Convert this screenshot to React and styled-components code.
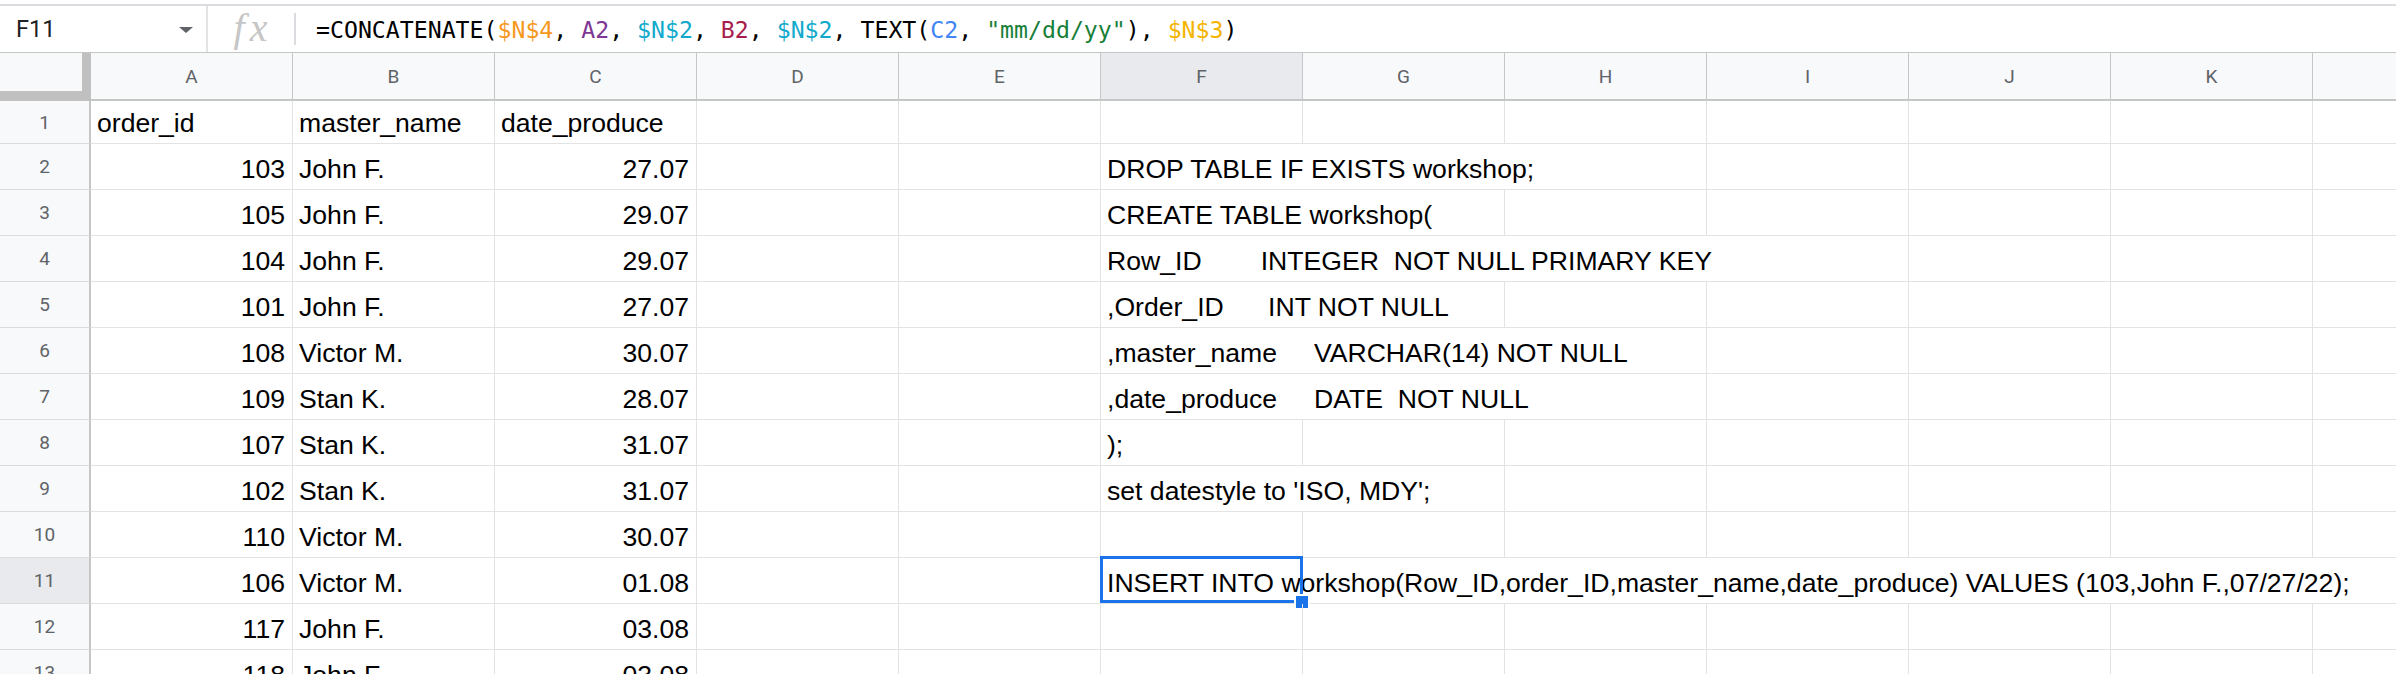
import React from 'react';
import styled, { createGlobalStyle } from 'styled-components';

const GlobalStyle = createGlobalStyle`
  html, body { margin: 0; padding: 0; background: #fff; overflow: hidden; }
  body { width: 2396px; height: 674px; font-family: "Liberation Sans", Arial, sans-serif; }
`;

const COL_W = 202;
const ROWHEAD_W = 91;

const Sheet = styled.div`
  width: 2396px;
  height: 674px;
  overflow: hidden;
  display: flex;
  flex-direction: column;
  background: #fff;
`;

const TopRule = styled.div`
  flex: none;
  margin-top: 4px;
  height: 2px;
  background: #dadce0;
`;

const FormulaBar = styled.div`
  flex: none;
  height: 47px;
  box-sizing: border-box;
  border-bottom: 1px solid #c4c7c5;
  display: flex;
  align-items: center;
`;

const NameBox = styled.div`
  width: 208px;
  height: 100%;
  box-sizing: border-box;
  display: flex;
  align-items: center;
  justify-content: space-between;
  padding: 0 13px 0 16px;
  border-right: 2px solid #e3e3e3;
  font-family: Roboto, "Liberation Sans", sans-serif;
  font-size: 23.5px;
  color: #202124;
`;

const Caret = styled.span`
  width: 0;
  height: 0;
  margin-top: 2px;
  border-left: 7.5px solid transparent;
  border-right: 7.5px solid transparent;
  border-top: 6px solid #5f6368;
`;

const FxBox = styled.div`
  width: 86px;
  height: 100%;
  display: flex;
  align-items: center;
  justify-content: center;
  font-family: "Liberation Serif", serif;
  font-style: italic;
  font-size: 40px;
  letter-spacing: 5px;
  color: #c6c6c6;
  padding: 0 0 4px 4px;
  box-sizing: border-box;
`;

const FxSep = styled.div`
  width: 2px;
  height: 32px;
  background: #dadce0;
`;

const FormulaText = styled.div`
  padding-left: 20px;
  font-family: "DejaVu Sans Mono", "Liberation Mono", monospace;
  font-size: 23.2px;
  color: #000;
  white-space: pre;
`;

const Token = styled.span`
  color: ${p => p.$c || '#000'};
`;

const HeaderRow = styled.div`
  flex: none;
  display: flex;
  height: 48px;
`;

const Corner = styled.div`
  flex: none;
  width: ${ROWHEAD_W}px;
  height: 48px;
  box-sizing: border-box;
  background: #f8f9fa;
  border-right: 9px solid #c0c0c0;
  border-bottom: 10px solid #c0c0c0;
`;

const ColHead = styled.div`
  flex: none;
  width: ${COL_W}px;
  height: 48px;
  box-sizing: border-box;
  border-right: 1px solid #c4c7c5;
  border-bottom: 2px solid #c4c7c5;
  background: ${p => (p.$sel ? '#e8eaed' : '#f8f9fa')};
  display: flex;
  align-items: center;
  justify-content: center;
  font-family: Roboto, "Liberation Sans", sans-serif;
  font-size: 19px;
  color: #5f6368;
`;

const Row = styled.div`
  flex: none;
  display: flex;
  height: ${p => p.$h}px;
`;

const RowHead = styled.div`
  flex: none;
  width: ${ROWHEAD_W}px;
  box-sizing: border-box;
  border-right: 2px solid #c4c7c5;
  border-bottom: 1px solid #dcdcdc;
  background: ${p => (p.$sel ? '#e8eaed' : '#f8f9fa')};
  display: flex;
  align-items: center;
  justify-content: center;
  font-family: Roboto, "Liberation Sans", sans-serif;
  font-size: 19px;
  color: #5f6368;
`;

const Cell = styled.div`
  flex: none;
  position: relative;
  width: ${p => p.$span * COL_W}px;
  box-sizing: border-box;
  border-right: 1px solid #e2e3e3;
  border-bottom: 1px solid #e2e3e3;
  display: flex;
  align-items: flex-end;
  justify-content: ${p => (p.$right ? 'flex-end' : 'flex-start')};
  padding: 0 7px 5px 6px;
  font-size: 26.6px;
  line-height: 30px;
  color: #000;
  white-space: pre;
`;

const Selection = styled.div`
  position: absolute;
  left: -1px;
  top: -2px;
  width: 203px;
  height: 47px;
  box-sizing: border-box;
  border: 3px solid #1a73e8;
  pointer-events: none;
`;

const FillHandle = styled.div`
  position: absolute;
  left: 193px;
  top: 36px;
  width: 12px;
  height: 12px;
  background: #1a73e8;
  border: 2px solid #fff;
`;

const COLS = ['A', 'B', 'C', 'D', 'E', 'F', 'G', 'H', 'I', 'J', 'K', 'L'];

const rows = [
  ['order_id', 'master_name', 'date_produce', '', 1],
  ['103', 'John F.', '27.07', 'DROP TABLE IF EXISTS workshop;', 3],
  ['105', 'John F.', '29.07', 'CREATE TABLE workshop(', 2],
  ['104', 'John F.', '29.07', 'Row_ID        INTEGER  NOT NULL PRIMARY KEY', 4],
  ['101', 'John F.', '27.07', ',Order_ID      INT NOT NULL', 2],
  ['108', 'Victor M.', '30.07', ',master_name     VARCHAR(14) NOT NULL', 3],
  ['109', 'Stan K.', '28.07', ',date_produce     DATE  NOT NULL', 3],
  ['107', 'Stan K.', '31.07', ');', 1],
  ['102', 'Stan K.', '31.07', "set datestyle to 'ISO, MDY';", 2],
  ['110', 'Victor M.', '30.07', '', 1],
  ['106', 'Victor M.', '01.08', 'INSERT INTO workshop(Row_ID,order_ID,master_name,date_produce) VALUES (103,John F.,07/27/22);', 7],
  ['117', 'John F.', '03.08', '', 1],
  ['118', 'John F.', '03.08', '', 1],
  ['', '', '', '', 1],
];

const formula = [
  ['=CONCATENATE(', null],
  ['$N$4', '#f7981d'],
  [', ', null],
  ['A2', '#7e3794'],
  [', ', null],
  ['$N$2', '#11a9cc'],
  [', ', null],
  ['B2', '#a61d4c'],
  [', ', null],
  ['$N$2', '#11a9cc'],
  [', TEXT(', null],
  ['C2', '#4285f4'],
  [', ', null],
  ['"mm/dd/yy"', '#188038'],
  ['), ', null],
  ['$N$3', '#f4b400'],
  [')', null],
];

export default function App() {
  return (
    <>
      <GlobalStyle />
      <Sheet>
        <TopRule />
        <FormulaBar>
          <NameBox>
            <span>F11</span>
            <Caret />
          </NameBox>
          <FxBox>fx</FxBox>
          <FxSep />
          <FormulaText>
            {formula.map(([t, c], i) => (
              <Token key={i} $c={c}>{t}</Token>
            ))}
          </FormulaText>
        </FormulaBar>
        <HeaderRow>
          <Corner />
          {COLS.map(c => (
            <ColHead key={c} $sel={c === 'F'}>{c}</ColHead>
          ))}
        </HeaderRow>
        {rows.map((r, i) => {
          const n = i + 1;
          const [a, b, c, f, span] = r;
          const rest = Math.max(0, 7 - span);
          const isNum = n > 1;
          return (
            <Row key={n} $h={n === 1 ? 43 : 46}>
              <RowHead $sel={n === 11}>{n}</RowHead>
              <Cell $span={1} $right={isNum}>{a}</Cell>
              <Cell $span={1}>{b}</Cell>
              <Cell $span={1} $right={isNum}>{c}</Cell>
              <Cell $span={1} />
              <Cell $span={1} />
              <Cell $span={span}>
                {f}
                {n === 11 && (
                  <>
                    <Selection />
                    <FillHandle />
                  </>
                )}
              </Cell>
              {Array.from({ length: rest }).map((_, k) => (
                <Cell key={k} $span={1} />
              ))}
            </Row>
          );
        })}
      </Sheet>
    </>
  );
}
